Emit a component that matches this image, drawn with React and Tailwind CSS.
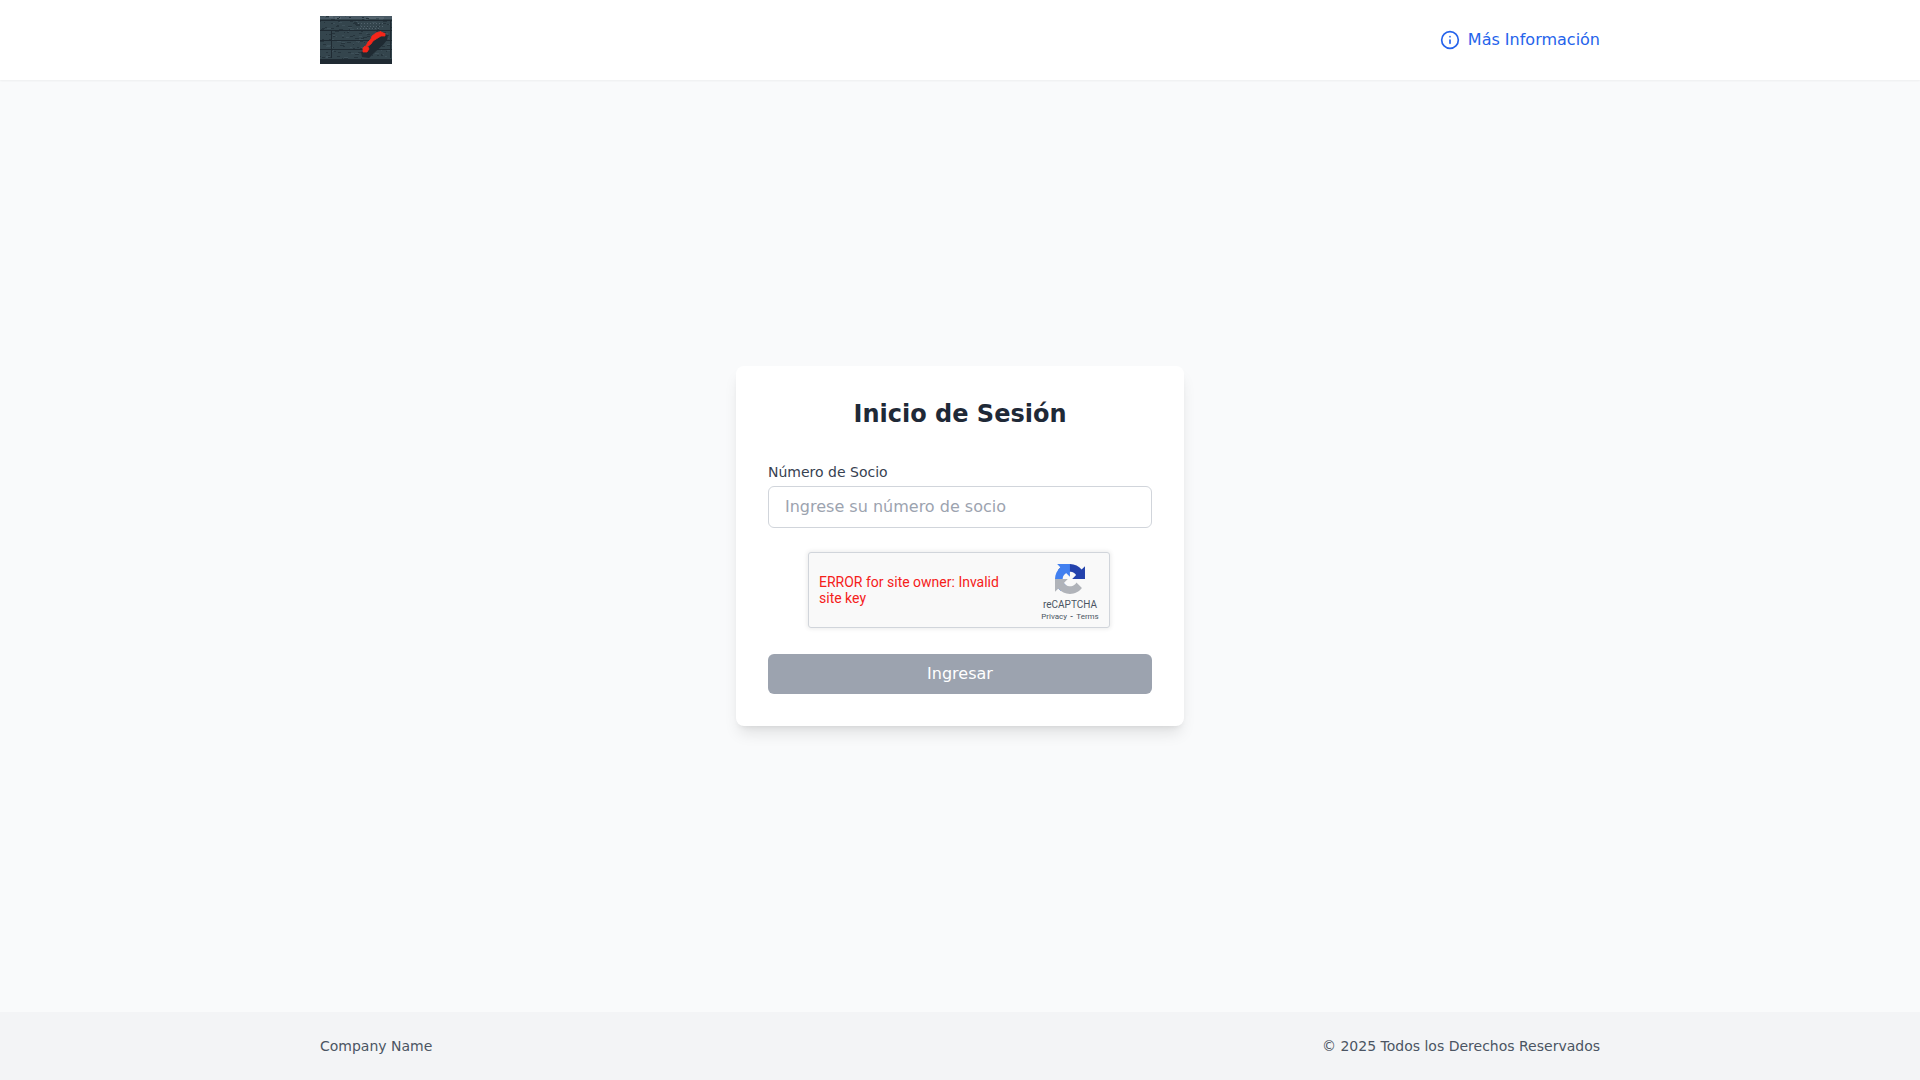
import { Info } from "lucide-react";

// Horizontal gaps between the weathered boards of the header image.
const boardLines = [4, 14, 24, 33, 43];

// Wood grain: short light and dark strokes scattered over the boards.
const grain = Array.from({ length: 210 }, (_, i) => ({
  x: (i * 29 + ((i * i) % 17)) % 72,
  y: (i * 13 + ((i * i) % 7)) % 46,
  length: 1 + ((i * 5) % 4),
  dark: i % 3 !== 0,
}));

const BrandImage = () => (
  <svg viewBox="0 0 72 48" className="h-12 w-[72px]" role="img" aria-label="Logo">
    <rect width="72" height="48" fill="#34454d" />
    <rect width="72" height="3" fill="#4a5a65" />
    <path d="M8 1h5M15 2h6M48 2h16" stroke="#64727d" />
    {grain.map((mark, index) => (
      <rect
        key={index}
        x={mark.x}
        y={mark.y}
        width={mark.length}
        height="1"
        fill={mark.dark ? "#26343c" : "#3e5059"}
      />
    ))}
    {boardLines.map((y) => (
      <rect key={y} y={y} width="72" height="1" fill="#1f2a32" />
    ))}
    <path d="M38 7.5h26M41 10.5h24M37 12.5h22" stroke="#52626c" strokeDasharray="1 2" />
    <path d="M11.5 14v28M70.5 4v38" stroke="#1f2a32" />
    <rect y="44" width="72" height="4" fill="#1f2a32" />
    <path d="M41 36l1 5 7 1 5-5 9-8 4-5 1-5-4-1-12 8-5 8z" fill="#1f2a32" />
    <path
      d="M43 36v-4l2-2 3 1 1 2-2 3zM46 30l2-4 3-3 1-3 4-3 5-1.500 1 1 3 1v2.500h-4l-5 3-3 2-2 3-3 2z"
      fill="#f5261a"
      stroke="#f5261a"
      strokeWidth="0.8"
    />
  </svg>
);

const RecaptchaMark = () => (
  <svg viewBox="0 0 64 64" className="size-[30px]" aria-hidden="true">
    <path
      d="M64 31.955l-.033-1.37V4.687l-7.16 7.16C50.948 4.674 42.033.093 32.05.093c-10.4 0-19.622 4.96-25.458 12.64l11.736 11.86a15.55 15.55 0 0 1 4.754-5.334c2.05-1.6 4.952-2.906 8.968-2.906.485 0 .86.057 1.135.163 4.976.393 9.288 3.14 11.828 7.124l-8.307 8.307L64 31.953"
      fill="#2442ac"
    />
    <path
      d="M31.862.094l-1.37.033H4.594l7.16 7.16C4.58 13.147 0 22.06 0 32.046c0 10.4 4.96 19.622 12.64 25.458L24.5 45.768a15.55 15.55 0 0 1-5.334-4.754c-1.6-2.05-2.906-4.952-2.906-8.968 0-.485.057-.86.163-1.135.393-4.976 3.14-9.288 7.124-11.828l8.307 8.307L31.86.095"
      fill="#4280f0"
    />
    <path
      d="M.001 32.045l.033 1.37v25.898l7.16-7.16c5.86 7.173 14.774 11.754 24.76 11.754 10.4 0 19.622-4.96 25.458-12.64l-11.736-11.86a15.55 15.55 0 0 1-4.754 5.334c-2.05 1.6-4.952 2.906-8.968 2.906-.485 0-.86-.057-1.135-.163-4.976-.393-9.288-3.14-11.828-7.124l8.307-8.307L0 32.047"
      fill="#b0b3b9"
    />
  </svg>
);

const Recaptcha = () => (
  <div className="w-[304px] pb-0.5 pr-0.5 font-[Roboto,sans-serif]">
    <div className="flex h-[76px] items-center justify-between rounded-[3px] border border-[#d1d5db] bg-[#f9f9f9] pl-2.5 pr-[7px] shadow-[0_0_4px_1px_rgba(0,0,0,0.08)]">
      <p role="alert" className="w-[188px] text-[14px] leading-4 text-[#f5201a]">
        ERROR for site owner: Invalid site key
      </p>
      <div className="flex w-16 flex-col items-center pt-[7px] text-[#4b5563]">
        <RecaptchaMark />
        <span className="mt-[5px] text-[10px] leading-3">reCAPTCHA</span>
        <div className="flex gap-[3px] whitespace-nowrap text-[8px] leading-3">
          <a href="https://www.google.com/intl/es/policies/privacy/">Privacy</a>
          <span className="font-bold" aria-hidden="true">-</span>
          <a href="https://www.google.com/intl/es/policies/terms/">Terms</a>
        </div>
      </div>
    </div>
  </div>
);

const App = () => {
  return (
    <div className="flex min-h-screen flex-col bg-[#f9fafb] font-['DejaVu_Sans',sans-serif]">
      <header className="bg-white py-4 shadow-xs">
        <div className="mx-auto flex max-w-7xl items-center justify-between">
          <BrandImage />
          <a href="#informacion" className="flex items-center gap-2 text-[#2563eb]">
            <Info className="h-5 w-5" aria-hidden="true" />
            Más Información
          </a>
        </div>
      </header>

      <main className="flex grow items-center justify-center">
        <div className="w-full max-w-md rounded-lg bg-white p-8 shadow-lg">
          <h1 className="mb-8 text-center text-2xl font-bold text-[#1f2937]">
            Inicio de Sesión
          </h1>

          <form className="space-y-6" onSubmit={(e) => e.preventDefault()}>
            <div>
              <label htmlFor="socio" className="mb-1 block text-sm text-[#374151]">
                Número de Socio
              </label>
              <input
                id="socio"
                type="text"
                placeholder="Ingrese su número de socio"
                className="block w-full rounded-md border border-[#d1d5db] px-4 py-2 placeholder:text-[#9ca3af]"
              />
            </div>

            <div className="flex justify-center">
              <Recaptcha />
            </div>

            <button
              type="submit"
              disabled
              className="block w-full cursor-not-allowed rounded-md bg-[#9ca3af] px-4 py-2 text-white"
            >
              Ingresar
            </button>
          </form>
        </div>
      </main>

      <footer className="bg-[#f3f4f6] py-6">
        <div className="mx-auto flex max-w-7xl items-center justify-between text-sm text-[#4b5563]">
          <p>Company Name</p>
          <p>© 2025 Todos los Derechos Reservados</p>
        </div>
      </footer>
    </div>
  );
};

export default App;
